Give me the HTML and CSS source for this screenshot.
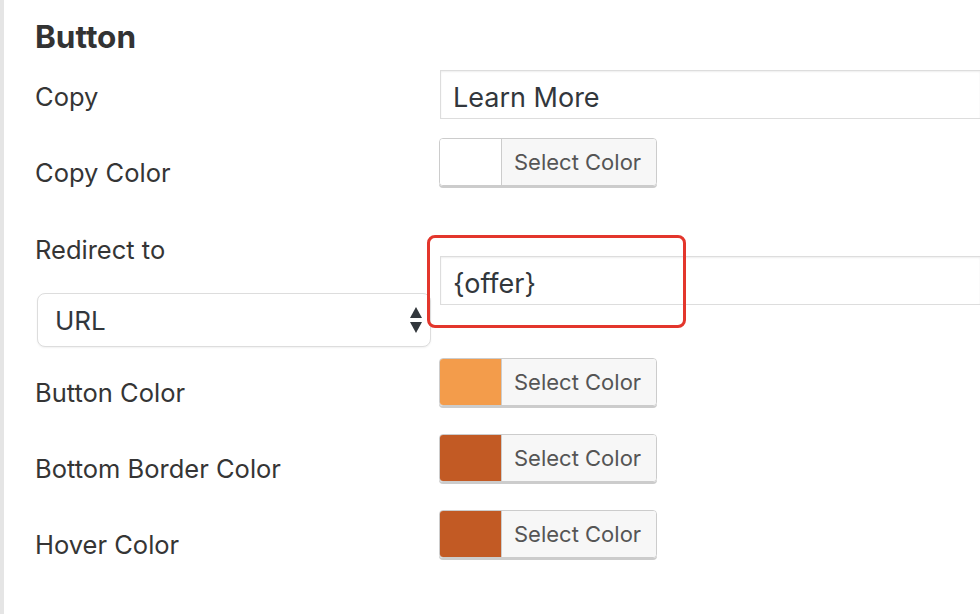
FILE: index.html
```html
<!DOCTYPE html>
<html lang="en">
<head>
    <meta charset="UTF-8">
    <meta name="viewport" content="width=device-width, initial-scale=1.0">
    <title>Button Settings</title>
    <link rel="stylesheet" href="styles.css">
</head>
<body>
    <div class="panel">
        <h2 class="section-title">Button</h2>

        <div class="form-row row-text">
            <div class="label">Copy</div>
            <div class="field">
                <input type="text" class="text-input" value="Learn More">
            </div>
        </div>

        <div class="form-row row-color">
            <div class="label">Copy Color</div>
            <div class="field">
                <div class="color-picker">
                    <span class="swatch" style="background-color: #ffffff;"></span>
                    <span class="picker-btn">Select Color</span>
                </div>
            </div>
        </div>

        <div class="form-row row-redirect">
            <div class="label-col">
                <div class="label">Redirect to</div>
                <div class="select-wrap">
                    <select class="select-input">
                        <option>URL</option>
                    </select>
                    <svg class="select-arrows" width="12" height="26" viewBox="0 0 12 26">
                        <path d="M6 0 L12 11 L0 11 Z" fill="#32373c"/>
                        <path d="M0 15 L12 15 L6 26 Z" fill="#32373c"/>
                    </svg>
                </div>
            </div>
            <div class="field field-redirect">
                <input type="text" class="text-input" value="{offer}">
                <div class="highlight-box"></div>
            </div>
        </div>

        <div class="form-row row-color">
            <div class="label">Button Color</div>
            <div class="field">
                <div class="color-picker">
                    <span class="swatch" style="background-color: #f39c4b;"></span>
                    <span class="picker-btn">Select Color</span>
                </div>
            </div>
        </div>

        <div class="form-row row-color">
            <div class="label">Bottom Border Color</div>
            <div class="field">
                <div class="color-picker">
                    <span class="swatch" style="background-color: #c25a24;"></span>
                    <span class="picker-btn">Select Color</span>
                </div>
            </div>
        </div>

        <div class="form-row row-color">
            <div class="label">Hover Color</div>
            <div class="field">
                <div class="color-picker">
                    <span class="swatch" style="background-color: #c25a24;"></span>
                    <span class="picker-btn">Select Color</span>
                </div>
            </div>
        </div>
    </div>
</body>
</html>
```

FILE: styles.css
```css
html, body {
    margin: 0;
    padding: 0;
    background: #ffffff;
    overflow: hidden;
}
body {
    font-family: Inter, 'Liberation Sans', sans-serif;
    color: #32373c;
    width: 980px;
    height: 614px;
}
.panel {
    border-left: 4px solid #e5e5e5;
    padding: 19px 0 0 31px;
    height: 614px;
    box-sizing: border-box;
}
.section-title {
    margin: 0 0 15px 0;
    font-size: 31.5px;
    line-height: 36px;
    font-weight: 700;
    color: #333333;
}
.form-row {
    display: flex;
    align-items: flex-start;
}
.label {
    flex-shrink: 0;
    width: 405px;
    font-size: 25.5px;
    line-height: 32px;
    color: #353535;
}
.row-text {
    height: 68px;
}
.row-text .label {
    padding-top: 11px;
}
.row-color {
    height: 76px;
}
.row-color .label {
    padding-top: 19px;
}
.row-redirect {
    height: 144px;
}
.label-col {
    flex-shrink: 0;
    width: 405px;
    padding-top: 20px;
}
.field {
    flex: 1;
    min-width: 0;
}
.field-redirect {
    position: relative;
    margin-top: 42px;
}
.text-input {
    display: block;
    box-sizing: border-box;
    width: 100%;
    height: 49px;
    margin: 0;
    padding: 5px 12px 0;
    border: 1px solid #dddddd;
    border-right: none;
    box-shadow: inset 0 1px 2px rgba(0, 0, 0, 0.07);
    font-family: inherit;
    font-size: 27px;
    color: #32373c;
    outline: none;
}
.select-wrap {
    position: relative;
    margin: 27px 0 0 2px;
    width: 394px;
}
.select-input {
    display: block;
    box-sizing: border-box;
    width: 394px;
    height: 54px;
    margin: 0;
    padding: 0 40px 0 17px;
    border: 1px solid #dddddd;
    border-radius: 8px;
    background: #ffffff;
    box-shadow: 0 1px 2px rgba(0, 0, 0, 0.06);
    -webkit-appearance: none;
    appearance: none;
    font-family: inherit;
    font-size: 26px;
    color: #32373c;
}
.select-arrows {
    position: absolute;
    right: 9px;
    top: 14px;
    pointer-events: none;
}
.highlight-box {
    position: absolute;
    left: -13px;
    top: -21px;
    width: 259px;
    height: 93px;
    box-sizing: border-box;
    border: 3px solid #e3362c;
    border-radius: 8px;
}
.color-picker {
    display: inline-flex;
    height: 48px;
    margin-left: -1px;
    box-sizing: border-box;
    border: 1px solid #cccccc;
    border-radius: 4px;
    box-shadow: 0 2px 0 #cccccc;
    overflow: hidden;
}
.swatch {
    width: 61px;
    border-right: 1px solid #cccccc;
}
.picker-btn {
    display: flex;
    align-items: center;
    padding: 0 12px;
    width: 130px;
    background: #f7f7f7;
    font-size: 22px;
    color: #555555;
}
```
